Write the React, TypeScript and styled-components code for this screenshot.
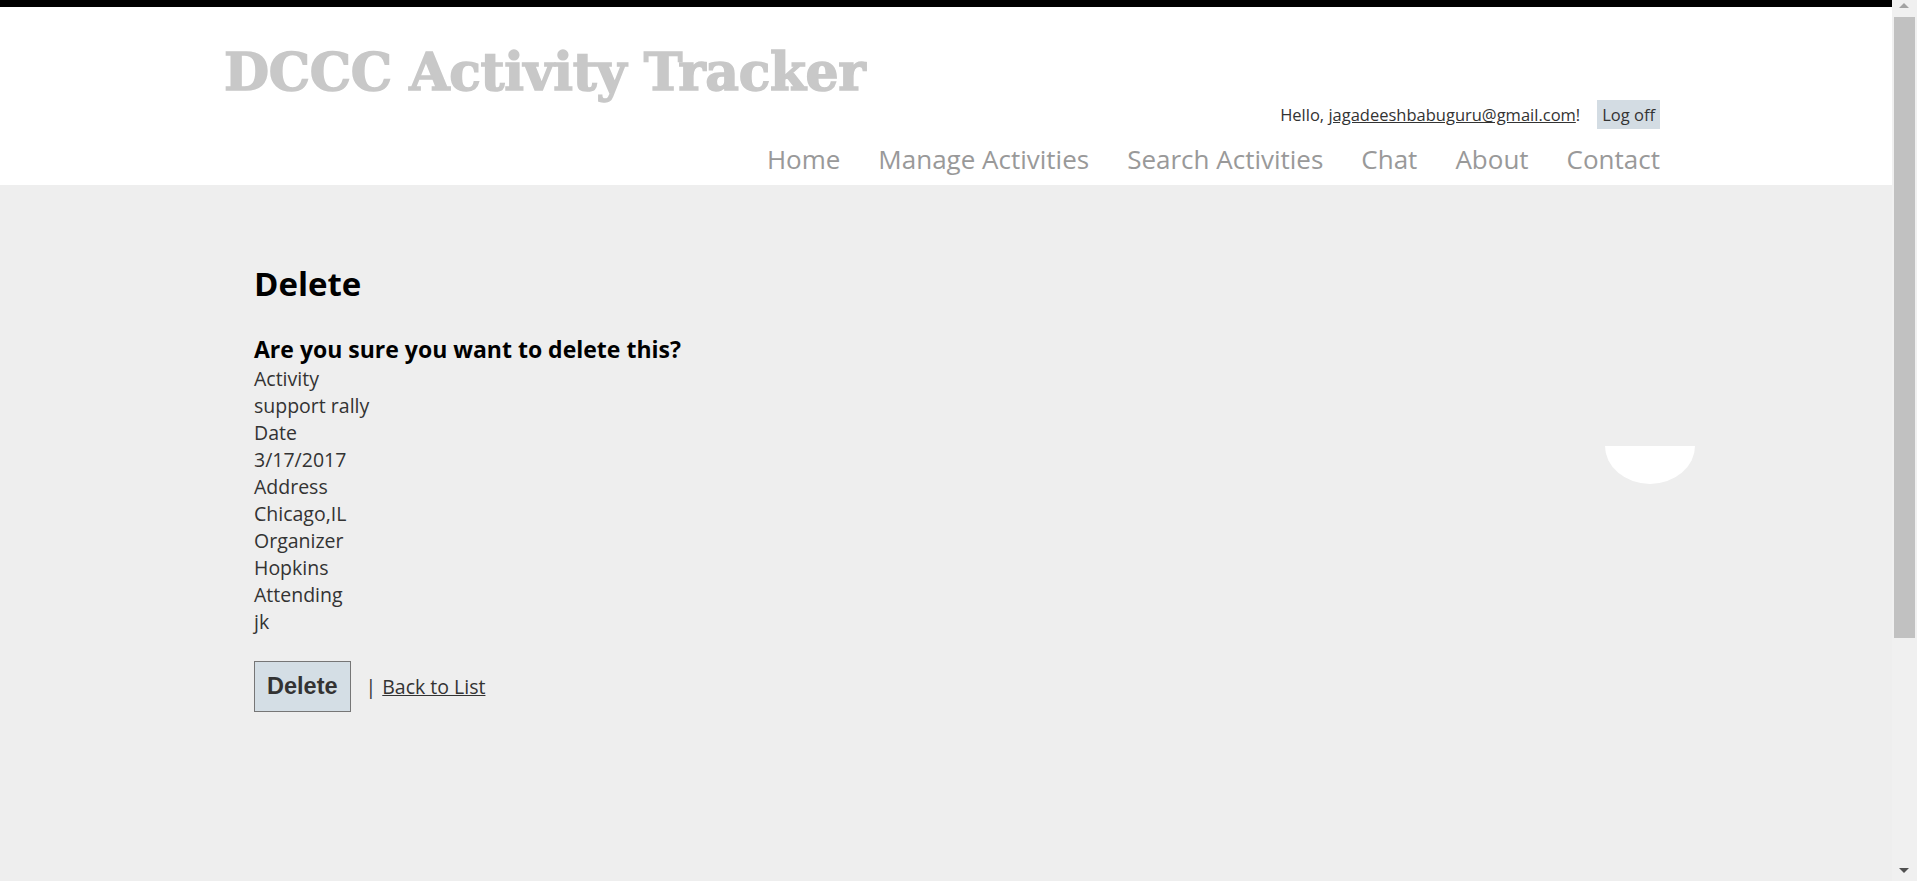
import React from "react";
import styled, { createGlobalStyle } from "styled-components";

const GlobalStyle = createGlobalStyle`
  html, body {
    margin: 0;
    padding: 0;
    background: #eeeeee;
    overflow: hidden;
  }

  body {
    font-family: "Open Sans", "Noto Sans", sans-serif;
    color: #333;
  }
`;

const navItems = ["Home", "Manage Activities", "Search Activities", "Chat", "About", "Contact"];

const details: [string, string][] = [
  ["Activity", "support rally"],
  ["Date", "3/17/2017"],
  ["Address", "Chicago,IL"],
  ["Organizer", "Hopkins"],
  ["Attending", "jk"]
];

const App: React.FC = () => {
  return (
    <>
      <GlobalStyle />
      <Page>
        <TopBar />
        <Header>
          <Container>
            <SiteTitle>DCCC Activity Tracker</SiteTitle>
            <UserRow>
              <span>
                Hello, <UserLink href="#">jagadeeshbabuguru@gmail.com</UserLink>!
              </span>
              <LogOff>Log off</LogOff>
            </UserRow>
            <Nav>
              {navItems.map(item => (
                <NavLink key={item} href="#">
                  {item}
                </NavLink>
              ))}
            </Nav>
          </Container>
        </Header>
        <Main>
          <Content>
            <Title>Delete</Title>
            <Question>Are you sure you want to delete this?</Question>
            <DetailList>
              {details.map(([label, value]) => (
                <React.Fragment key={label}>
                  <dt>{label}</dt>
                  <dd>{value}</dd>
                </React.Fragment>
              ))}
            </DetailList>
            <Actions>
              <DeleteButton type="button">Delete</DeleteButton>
              <Separator>|</Separator>
              <BackLink href="#">Back to List</BackLink>
            </Actions>
            <Bubble />
          </Content>
        </Main>
      </Page>
      <ScrollTrack>
        <ArrowUp />
        <Thumb />
        <ArrowDown />
      </ScrollTrack>
    </>
  );
};

const Page = styled.div`
  margin-right: 25px;
  min-height: 881px;
`;

const TopBar = styled.div`
  height: 7px;
  background: #000;
`;

const Header = styled.header`
  background: #fff;
`;

const Container = styled.div`
  width: 1440px;
  margin: 0 auto;
  padding-right: 6px;
  box-sizing: border-box;
  display: flex;
  flex-direction: column;
`;

const SiteTitle = styled.div`
  margin: 37px 0 0 -2px;
  font-family: "DejaVu Serif", serif;
  font-weight: bold;
  font-size: 52px;
  line-height: 56px;
  letter-spacing: -0.4px;
  color: #c8c8c8;
  -webkit-text-stroke: 1.5px #c8c8c8;
`;

const UserRow = styled.div`
  display: flex;
  justify-content: flex-end;
  align-items: center;
  gap: 17px;
  height: 29px;
  font-size: 16.5px;
  line-height: 29px;
  color: #333;
`;

const UserLink = styled.a`
  color: #333;
  text-decoration: underline;
`;

const LogOff = styled.span`
  display: inline-block;
  padding: 0 5px;
  font-size: 16.5px;
  background: #d3dce3;
  color: #333;
`;

const Nav = styled.nav`
  display: flex;
  justify-content: flex-end;
  gap: 38px;
  padding-top: 4px;
`;

const NavLink = styled.a`
  font-size: 26px;
  line-height: 52px;
  color: #999;
  text-decoration: none;
`;

const Main = styled.main`
  background: #eeeeee;
`;

const Content = styled.div`
  position: relative;
  width: 1440px;
  margin: 0 auto;
  padding: 79px 0 0 28px;
  box-sizing: border-box;
`;

const Title = styled.h1`
  margin: 0;
  font-size: 33px;
  line-height: 40px;
  font-weight: bold;
  color: #000;
`;

const Question = styled.h3`
  margin: 30px 0 0;
  font-size: 23px;
  line-height: 30px;
  font-weight: bold;
  color: #000;
`;

const DetailList = styled.dl`
  margin: 1px 0 0;
  font-size: 19.5px;
  line-height: 27px;
  color: #333;

  dt,
  dd {
    margin: 0;
    font-weight: normal;
  }
`;

const Actions = styled.div`
  display: flex;
  align-items: baseline;
  margin-top: 26px;
  font-size: 19.5px;
  color: #333;
`;

const DeleteButton = styled.button`
  height: 51px;
  padding: 0 12px;
  border: 1px solid #767676;
  background: #d4dee5;
  font-family: "Liberation Sans", Arial, sans-serif;
  font-weight: bold;
  font-size: 23.5px;
  color: #333;
`;

const Separator = styled.span`
  margin: 0 6px 0 15px;
`;

const BackLink = styled.a`
  color: #333;
  text-decoration: underline;
`;

const Bubble = styled.div`
  position: absolute;
  top: 261px;
  left: 1379px;
  width: 90px;
  height: 38px;
  background: #fff;
  border-bottom-left-radius: 45px 38px;
  border-bottom-right-radius: 45px 38px;
`;

const ScrollTrack = styled.div`
  position: fixed;
  top: 0;
  right: 0;
  width: 25px;
  height: 100vh;
  background: #f0f0f0;
`;

const Thumb = styled.div`
  position: absolute;
  top: 17px;
  left: 2px;
  width: 21px;
  height: 621px;
  background: #c1c1c1;
`;

const ArrowUp = styled.div`
  position: absolute;
  top: 3px;
  left: 7px;
  width: 0;
  height: 0;
  border-left: 5px solid transparent;
  border-right: 5px solid transparent;
  border-bottom: 5px solid #a3a3a3;
`;

const ArrowDown = styled.div`
  position: absolute;
  bottom: 8px;
  left: 7px;
  width: 0;
  height: 0;
  border-left: 5px solid transparent;
  border-right: 5px solid transparent;
  border-top: 5px solid #505050;
`;

export default App;
